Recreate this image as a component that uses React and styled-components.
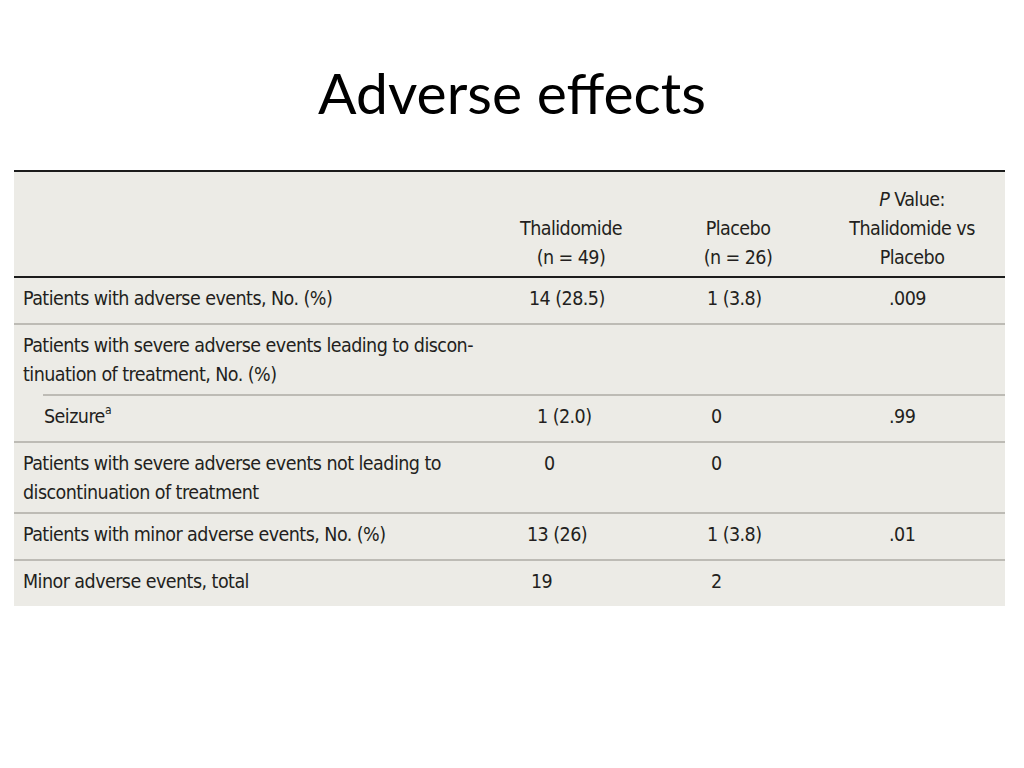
import styled, { createGlobalStyle } from "styled-components";

const GlobalStyle = createGlobalStyle`
  html, body {
    margin: 0;
    padding: 0;
    background: #fff;
  }
`;

// 슬라이드 전체
const Slide = styled.div`
  width: 1024px;
  height: 768px;
  background: #fff;
  overflow: hidden;
`;

const Title = styled.h1`
  margin: 0;
  height: 170px;
  box-sizing: border-box;
  padding-top: 59px;
  text-align: center;
  font-family: Lato, "Open Sans", sans-serif;
  font-weight: 400;
  font-size: 57px;
  line-height: 66px;
  color: #000;
`;

// 표 배경
const Table = styled.div`
  width: 991px;
  margin-left: 14px;
  background: #ecebe6;
  border-top: 2px solid #1c1c1c;
  font-family: "Liberation Sans Narrow", "DejaVu Sans Condensed", "Liberation Sans", sans-serif;
  font-stretch: condensed;
  font-size: 19.5px;
  letter-spacing: -0.55px;
  color: #231f20;
`;

const cols = "494px 126px 208px 140px";

const HeadRow = styled.div`
  display: grid;
  grid-template-columns: ${cols};
  align-items: end;
  height: 106px;
  box-sizing: border-box;
  padding-bottom: 4px;
  border-bottom: 2px solid #1c1c1c;
  line-height: 29px;
`;

const HeadCell = styled.div`
  text-align: center;
  white-space: nowrap;
`;

const Row = styled.div`
  display: grid;
  grid-template-columns: ${cols};
  align-items: start;
  min-height: 45px;
  box-sizing: border-box;
  padding: 6px 0 5px;
  line-height: 29px;
`;

const Label = styled.div`
  padding-left: ${(p) => (p.$sub ? 30 : 9)}px;
  white-space: nowrap;
`;

// 숫자 칸, 원본 표처럼 왼쪽 정렬에 칸마다 들여쓰기
const Value = styled.div`
  padding-left: ${(p) => p.$pad}px;
  white-space: nowrap;
`;

const Rule = styled.div`
  height: 2px;
  margin-left: ${(p) => (p.$inset ? 29 : 0)}px;
  background: #bdbbb5;
`;

const Sup = styled.sup`
  font-size: 12px;
  line-height: 0;
  vertical-align: 9px;
`;

const rows = [
  { label: "Patients with adverse events, No. (%)", vals: ["14 (28.5)", "1 (3.8)", ".009"], ind: [2, 0, 0] },
  {
    label: "Patients with severe adverse events leading to discon-\ntinuation of treatment, No. (%)",
    vals: ["", "", ""],
    ind: [0, 0, 0],
  },
  { label: "Seizure", sup: "a", sub: true, vals: ["1 (2.0)", "0", ".99"], ind: [10, 4, 0] },
  {
    label: "Patients with severe adverse events not leading to\ndiscontinuation of treatment",
    vals: ["0", "0", ""],
    ind: [17, 4, 0],
  },
  { label: "Patients with minor adverse events, No. (%)", vals: ["13 (26)", "1 (3.8)", ".01"], ind: [0, 0, 0] },
  { label: "Minor adverse events, total", vals: ["19", "2", ""], ind: [4, 4, 0] },
];

const pads = [19, 73, 47];

export default function App() {
  return (
    <>
      <GlobalStyle />
      <Slide>
        <Title>Adverse effects</Title>
        <Table>
          <HeadRow>
            <div />
            <HeadCell>
              Thalidomide
              <br />
              (n = 49)
            </HeadCell>
            <HeadCell>
              Placebo
              <br />
              (n = 26)
            </HeadCell>
            <HeadCell>
              <i>P</i> Value:
              <br />
              Thalidomide vs
              <br />
              Placebo
            </HeadCell>
          </HeadRow>
          {rows.map((r, i) => (
            <div key={i}>
              {i > 0 && <Rule $inset={r.sub} />}
              <Row>
                <Label $sub={r.sub}>
                  {r.label.split("\n").map((line, j) => (
                    <div key={j}>
                      {line}
                      {r.sup && <Sup>{r.sup}</Sup>}
                    </div>
                  ))}
                </Label>
                {r.vals.map((v, j) => (
                  <Value key={j} $pad={pads[j] + r.ind[j]}>
                    {v}
                  </Value>
                ))}
              </Row>
            </div>
          ))}
        </Table>
      </Slide>
    </>
  );
}
